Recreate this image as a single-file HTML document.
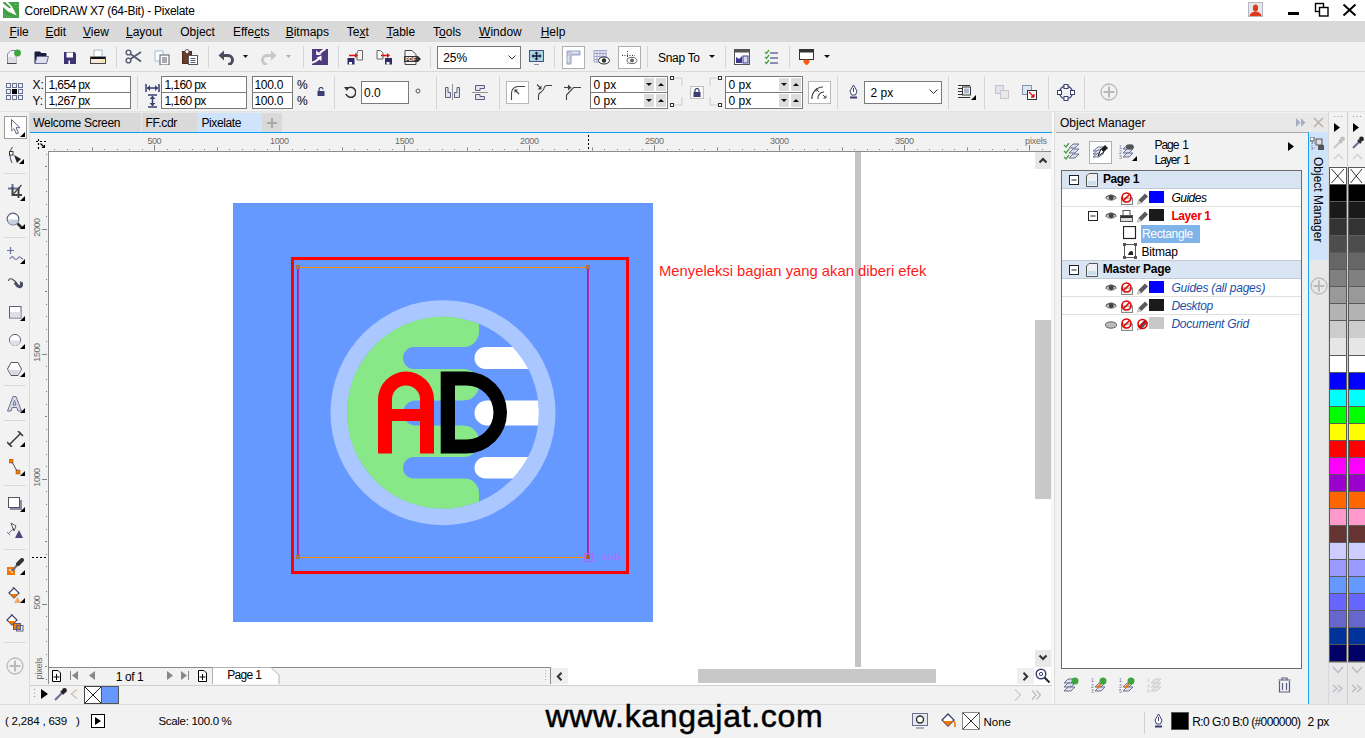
<!DOCTYPE html><html><head><meta charset="utf-8"><style>
*{margin:0;padding:0;box-sizing:border-box}
html,body{width:1365px;height:738px;overflow:hidden;background:#f2f2f2}
body{position:relative;font-family:"Liberation Sans",sans-serif;color:#000}
.r{position:absolute}
.t{position:absolute;line-height:1;white-space:nowrap}
.u{text-decoration:underline;text-underline-offset:1px}
</style></head><body>
<div class="r" style="left:0px;top:0px;width:1365px;height:21px;background:#fff"></div>
<svg class="r" style="left:3px;top:2px;" width="16" height="16" viewBox="0 0 16 16"><rect width="16" height="16" fill="#43a047"/><polygon points="0,0 5,0 8.8,4.3 11.3,8.7 13.6,13.4 5,9.6 0,5" fill="#fff"/><line x1="1.2" y1="0.9" x2="6.6" y2="5.3" stroke="#43a047" stroke-width="2" stroke-linecap="round"/><g fill="#8fd08f"><circle cx="12.5" cy="2.5" r="0.6"/><circle cx="15" cy="2.5" r="0.6"/><circle cx="15" cy="5.5" r="0.6"/><circle cx="1.5" cy="12.5" r="0.6"/><circle cx="3.5" cy="14" r="0.6"/><circle cx="6.5" cy="14.5" r="0.6"/></g></svg>
<div class="t " style="left:24.6px;top:4.64px;font-size:12px;letter-spacing:-0.28px">CorelDRAW X7 (64-Bit) - Pixelate</div>
<svg class="r" style="left:1248px;top:2px;" width="15" height="15" viewBox="0 0 15 15"><rect x="0.5" y="0.5" width="14" height="14" fill="#e6e6ea" stroke="#b8b8c0"/><ellipse cx="7.5" cy="6" rx="2.6" ry="3.6" fill="#e03a1a"/><path d="M1.5,14 Q2,10 7.5,9.5 Q13,10 13.5,14Z" fill="#e03a1a"/></svg>
<div class="r" style="left:1288px;top:12px;width:11px;height:2.5px;background:#000"></div>
<svg class="r" style="left:1314px;top:2px;" width="16" height="15" viewBox="0 0 16 15"><rect x="1.5" y="1.5" width="8" height="8" fill="#fff" stroke="#000" stroke-width="1.4"/><rect x="5.5" y="5.5" width="8.5" height="8.5" fill="#fff" stroke="#000" stroke-width="1.4"/></svg>
<svg class="r" style="left:1342px;top:4px;" width="15" height="12" viewBox="0 0 15 12"><path d="M1.5,0.5 L13.5,11.5 M13.5,0.5 L1.5,11.5" stroke="#000" stroke-width="2"/></svg>
<div class="r" style="left:0px;top:21px;width:1365px;height:21px;background:#d9d9d9"></div>
<div class="t " style="left:9.4px;top:26.24px;font-size:12px;"><u>F</u>ile</div>
<div class="t " style="left:45.4px;top:26.24px;font-size:12px;"><u>E</u>dit</div>
<div class="t " style="left:83px;top:26.24px;font-size:12px;"><u>V</u>iew</div>
<div class="t " style="left:126px;top:26.24px;font-size:12px;"><u>L</u>ayout</div>
<div class="t " style="left:180.2px;top:26.24px;font-size:12px;">Ob<u>j</u>ect</div>
<div class="t " style="left:233px;top:26.24px;font-size:12px;">Effe<u>c</u>ts</div>
<div class="t " style="left:285.7px;top:26.24px;font-size:12px;"><u>B</u>itmaps</div>
<div class="t " style="left:346.7px;top:26.24px;font-size:12px;">Te<u>x</u>t</div>
<div class="t " style="left:386.5px;top:26.24px;font-size:12px;"><u>T</u>able</div>
<div class="t " style="left:433.1px;top:26.24px;font-size:12px;">T<u>o</u>ols</div>
<div class="t " style="left:479.1px;top:26.24px;font-size:12px;"><u>W</u>indow</div>
<div class="t " style="left:540.7px;top:26.24px;font-size:12px;"><u>H</u>elp</div>
<div class="r" style="left:0px;top:42px;width:1365px;height:30px;background:#f2f2f2"></div>
<div class="r" style="left:0px;top:71px;width:1365px;height:1px;background:#dadada"></div>
<div class="r" style="left:116px;top:46px;width:1px;height:22px;background:#d5d5d5"></div>
<div class="r" style="left:208px;top:46px;width:1px;height:22px;background:#d5d5d5"></div>
<div class="r" style="left:303px;top:46px;width:1px;height:22px;background:#d5d5d5"></div>
<div class="r" style="left:338px;top:46px;width:1px;height:22px;background:#d5d5d5"></div>
<div class="r" style="left:430px;top:46px;width:1px;height:22px;background:#d5d5d5"></div>
<div class="r" style="left:554px;top:46px;width:1px;height:22px;background:#d5d5d5"></div>
<div class="r" style="left:647px;top:46px;width:1px;height:22px;background:#d5d5d5"></div>
<div class="r" style="left:725px;top:46px;width:1px;height:22px;background:#d5d5d5"></div>
<div class="r" style="left:789px;top:46px;width:1px;height:22px;background:#d5d5d5"></div>
<svg class="r" style="left:6px;top:49px;" width="16" height="16" viewBox="0 0 16 16"><path d="M1.5,14.5 V5 L5,1.5 H10 V14.5 Z" fill="#f4f4f8" stroke="#8a8ca8"/><rect x="2" y="8" width="8" height="6" fill="#dcdde6"/><path d="M1,14.5 H10.5" stroke="#444"/><circle cx="11.5" cy="4" r="3.4" fill="#3fa53f"/></svg>
<svg class="r" style="left:34px;top:50px;" width="16" height="15" viewBox="0 0 16 15"><path d="M1,13.5 V2 H6 L7,3.5 H12 V6" fill="#1c1c40" stroke="#1c1c40"/><path d="M1,13.5 L3,6.5 H14.5 L12.5,13.5 Z" fill="#dfe0ee" stroke="#6a6c90"/></svg>
<svg class="r" style="left:64px;top:52px;" width="12" height="12" viewBox="0 0 12 12"><path d="M0,0 H10.5 L12,1.5 V12 H0Z" fill="#3c3472"/><rect x="2.5" y="0.5" width="6.5" height="5" fill="#fff"/><rect x="4.5" y="8.5" width="1.5" height="3.5" fill="#fff"/></svg>
<svg class="r" style="left:90px;top:49px;" width="16" height="15" viewBox="0 0 16 15"><rect x="4" y="1" width="8" height="7" fill="#fff" stroke="#a8b8c8"/><rect x="0.5" y="8" width="15" height="6.5" fill="#f6e8d8" stroke="#444"/><rect x="1" y="8" width="14" height="2" fill="#111"/><rect x="12" y="11.5" width="1.5" height="1.2" fill="#ee0"/></svg>
<svg class="r" style="left:125px;top:49px;" width="17" height="15" viewBox="0 0 17 15"><circle cx="3.5" cy="3.5" r="2.4" fill="none" stroke="#555a70" stroke-width="1.4"/><circle cx="3.5" cy="11.5" r="2.4" fill="none" stroke="#555a70" stroke-width="1.4"/><path d="M5.5,5 L16,12.5 M5.5,10 L16,3" stroke="#555a70" stroke-width="1.8"/></svg>
<svg class="r" style="left:154px;top:50px;" width="16" height="15" viewBox="0 0 16 15"><rect x="1" y="1" width="8" height="10" fill="#fff" stroke="#a8c0d0"/><rect x="6" y="5" width="9" height="10" fill="#fff" stroke="#556"/><path d="M8,8 H13 M8,10 H13 M8,12 H13" stroke="#556"/></svg>
<svg class="r" style="left:182px;top:49px;" width="16" height="16" viewBox="0 0 16 16"><rect x="0.5" y="2.5" width="9" height="12" fill="#6a3a2a" stroke="#4a2a1a"/><circle cx="5" cy="2.5" r="2" fill="#fff" stroke="#555"/><rect x="6.5" y="6.5" width="9" height="9" fill="#fff" stroke="#556"/><path d="M8.5,9.5 H13.5 M8.5,11.5 H13.5 M8.5,13.5 H13.5" stroke="#556"/></svg>
<svg class="r" style="left:218px;top:49px;" width="17" height="16" viewBox="0 0 17 16"><path d="M4,6.5 H10 A4.5,4.5 0 0 1 10,15.5" fill="none" stroke="#4a4c5e" stroke-width="3"/><path d="M0.5,6.5 L6,1.5 V11.5 Z" fill="#4a4c5e"/></svg>
<svg class="r" style="left:243px;top:55px;" width="5" height="3" viewBox="0 0 5 3"><path d="M0,0 H5 L2.5,3Z" fill="#111"/></svg>
<svg class="r" style="left:260px;top:49px;" width="17" height="16" viewBox="0 0 17 16"><path d="M13,6.5 H7 A4.5,4.5 0 0 0 7,15.5" fill="none" stroke="#c8c8c8" stroke-width="3"/><path d="M16.5,6.5 L11,1.5 V11.5 Z" fill="#c8c8c8"/></svg>
<svg class="r" style="left:286px;top:55px;" width="5" height="3" viewBox="0 0 5 3"><path d="M0,0 H5 L2.5,3Z" fill="#b0b0b0"/></svg>
<svg class="r" style="left:312px;top:49px;" width="16" height="16" viewBox="0 0 16 16"><rect width="16" height="16" fill="#4f3a7f"/><path d="M13.5,0 Q10,1.5 7.5,4.5" stroke="#fff" stroke-width="2" fill="none"/><path d="M4.2,1.2 V6 H9Z" fill="#fff"/><path d="M0,13.8 Q4,12.5 7,9.5" stroke="#fff" stroke-width="2" fill="none"/><path d="M4.5,8.8 L9.5,6.6 V12Z" fill="#fff"/></svg>
<svg class="r" style="left:347px;top:50px;" width="17" height="15" viewBox="0 0 17 15"><path d="M11,0.5 H15.5 V10 H10 V3 Z" fill="#f6f6f6" stroke="#666"/><rect x="0.5" y="8" width="7" height="6.5" fill="#2f2b66"/><rect x="2" y="12" width="3" height="2.5" fill="#fff"/><path d="M2,5.5 H9" stroke="#e01010" stroke-width="1.6"/><path d="M8,3 L11,5.5 L8,8Z" fill="#e01010"/></svg>
<svg class="r" style="left:376px;top:50px;" width="17" height="15" viewBox="0 0 17 15"><path d="M4.5,0.5 H1 V9 H7 V3 Z" fill="#f6f6f6" stroke="#666"/><rect x="9" y="8" width="7" height="6.5" fill="#2f2b66"/><rect x="10.5" y="12" width="3" height="2.5" fill="#fff"/><path d="M5,5.5 H12" stroke="#e01010" stroke-width="1.6"/><path d="M11,3 L14,5.5 L11,8Z" fill="#e01010"/></svg>
<svg class="r" style="left:404px;top:50px;" width="17" height="15" viewBox="0 0 17 15"><path d="M1,14.5 V0.5 H8 L12,4.5 V14.5Z" fill="#f6f6f6" stroke="#444"/><rect x="0" y="6" width="14" height="6" fill="#333"/><path d="M14,6 L17,9 L14,12Z" fill="#333"/><text x="1.2" y="11.2" font-size="5.5" font-weight="bold" fill="#fff" font-family="Liberation Sans">PDF</text></svg>
<div class="r" style="left:437px;top:46px;width:84px;height:23px;background:#fff;border:1px solid #7a7a7a"></div>
<div class="t " style="left:443.2px;top:51.54px;font-size:12px;">25%</div>
<svg class="r" style="left:508px;top:55px;" width="8" height="5" viewBox="0 0 8 5"><path d="M0.5,0.5 L4,4 L7.5,0.5" fill="none" stroke="#333"/></svg>
<svg class="r" style="left:529px;top:50px;" width="15" height="15" viewBox="0 0 15 15"><rect x="0.5" y="0.5" width="14" height="11" fill="#a6d8e2" stroke="#4a5080"/><path d="M5,14.5 H10" stroke="#8890b0"/><path d="M7.5,2 V10 M3,6 H12" stroke="#1a1a40" stroke-width="1.4"/><path d="M7.5,1.5 L5.5,3.5 H9.5Z M7.5,10.5 L5.5,8.5 H9.5Z M2.5,6 L4.5,4 V8Z M12.5,6 L10.5,4 V8Z" fill="#1a1a40"/></svg>
<div class="r" style="left:562px;top:46px;width:23px;height:23px;background:#fff;border:1px solid #b0b0b0"></div>
<svg class="r" style="left:566px;top:50px;" width="15" height="15" viewBox="0 0 15 15"><path d="M1,1 H14 V5 H5 V14 H1 Z" fill="#c8cce0" stroke="#9aa0c0"/><path d="M7,1.5 V3 M9,1.5 V3 M11,1.5 V3 M1.5,7 H3 M1.5,9 H3 M1.5,11 H3" stroke="#fff"/></svg>
<svg class="r" style="left:593px;top:49px;" width="17" height="16" viewBox="0 0 17 16"><path d="M1,1 V13 M4,1 V13 M7,1 V13 M10,1 V8 M13,1 V7 M1,1.5 H14 M1,4.5 H14 M1,7.5 H14 M1,10.5 H6 M1,13 H6" stroke="#a0a4cc"/><ellipse cx="11" cy="11.5" rx="5.5" ry="3.5" fill="#fff" stroke="#333"/><circle cx="11" cy="11.5" r="2.2" fill="#333"/></svg>
<div class="r" style="left:618px;top:46px;width:23px;height:23px;background:#fff;border:1px solid #b0b0b0"></div>
<svg class="r" style="left:621px;top:50px;" width="17" height="16" viewBox="0 0 17 16"><path d="M6.5,1 V14 M1,5.5 H14" stroke="#333" stroke-dasharray="1,1.5"/><ellipse cx="11" cy="10.5" rx="5" ry="3.2" fill="#fff" stroke="#666"/><circle cx="11" cy="10.5" r="2" fill="#666"/></svg>
<div class="t " style="left:658px;top:52.24px;font-size:12px;letter-spacing:-0.3px">Snap To</div>
<svg class="r" style="left:709px;top:55px;" width="6" height="3" viewBox="0 0 6 3"><path d="M0,0 H6 L3,3Z" fill="#111"/></svg>
<svg class="r" style="left:734px;top:49px;" width="16" height="16" viewBox="0 0 16 16"><rect x="0.5" y="0.5" width="15" height="15" fill="#fff" stroke="#555"/><rect x="0.5" y="0.5" width="15" height="3" fill="#555"/><path d="M2,14 V8 L5,10 L8,7 V14Z" fill="#3a3a90"/><rect x="9" y="7" width="5" height="7" fill="#d0d8f0" stroke="#3a3a90"/></svg>
<svg class="r" style="left:764px;top:49px;" width="14" height="16" viewBox="0 0 14 16"><path d="M1,3 L2.5,4.5 L5,1 M1,8 L2.5,9.5 L5,6 M1,13 L2.5,14.5 L5,11" stroke="#4aa040" stroke-width="1.3" fill="none"/><path d="M6,4 H14 M6,9 H14 M6,14 H14" stroke="#6a6ca0" stroke-width="1.3"/></svg>
<svg class="r" style="left:799px;top:48px;" width="15" height="18" viewBox="0 0 15 18"><rect x="0.5" y="1.5" width="14" height="10" fill="#fff" stroke="#333"/><rect x="0.5" y="1.5" width="14" height="3" fill="#333"/><path d="M4,13 Q7.5,10 11,13 Q9,17 7.5,17 Q6,17 4,13Z" fill="#ff5a10"/></svg>
<svg class="r" style="left:824px;top:55px;" width="6" height="3" viewBox="0 0 6 3"><path d="M0,0 H6 L3,3Z" fill="#111"/></svg>
<div class="r" style="left:0px;top:72px;width:1365px;height:40px;background:#f2f2f2"></div>
<div class="r" style="left:137px;top:76px;width:1px;height:33px;background:#d5d5d5"></div>
<div class="r" style="left:334px;top:76px;width:1px;height:33px;background:#d5d5d5"></div>
<div class="r" style="left:436px;top:76px;width:1px;height:33px;background:#d5d5d5"></div>
<div class="r" style="left:499px;top:76px;width:1px;height:33px;background:#d5d5d5"></div>
<div class="r" style="left:837px;top:76px;width:1px;height:33px;background:#d5d5d5"></div>
<div class="r" style="left:948px;top:76px;width:1px;height:33px;background:#d5d5d5"></div>
<div class="r" style="left:984px;top:76px;width:1px;height:33px;background:#d5d5d5"></div>
<div class="r" style="left:1048px;top:76px;width:1px;height:33px;background:#d5d5d5"></div>
<div class="r" style="left:1084px;top:76px;width:1px;height:33px;background:#d5d5d5"></div>
<svg class="r" style="left:6px;top:83px;" width="17" height="17" viewBox="0 0 17 17"><g fill="none" stroke="#6a7090"><rect x="0.5" y="0.5" width="4" height="4"/><rect x="6.5" y="0.5" width="4" height="4"/><rect x="12.5" y="0.5" width="4" height="4"/><rect x="0.5" y="6.5" width="4" height="4"/><rect x="12.5" y="6.5" width="4" height="4"/><rect x="0.5" y="12.5" width="4" height="4"/><rect x="6.5" y="12.5" width="4" height="4"/><rect x="12.5" y="12.5" width="4" height="4"/></g><rect x="6" y="6" width="5" height="5" fill="#000"/></svg>
<div class="t " style="left:32.4px;top:79.34px;font-size:12px;">X:</div>
<div class="t " style="left:32.4px;top:95.34px;font-size:12px;">Y:</div>
<div class="r" style="left:45px;top:76px;width:86px;height:17px;background:#fff;border:1px solid #7a7a7a"></div>
<div class="r" style="left:45px;top:92px;width:86px;height:17px;background:#fff;border:1px solid #7a7a7a"></div>
<div class="t " style="left:48.5px;top:79.34px;font-size:12px;letter-spacing:-0.6px">1,654 px</div>
<div class="t " style="left:48.5px;top:95.34px;font-size:12px;letter-spacing:-0.6px">1,267 px</div>
<svg class="r" style="left:145px;top:83px;" width="15" height="10" viewBox="0 0 15 10"><path d="M1,1 V9 M14,1 V9 M2,5 H13" stroke="#3a3e70" stroke-width="1.5"/><path d="M2,5 L5,2 V8Z M13,5 L10,2 V8Z" fill="#3a3e70"/></svg>
<svg class="r" style="left:147px;top:94px;" width="11" height="14" viewBox="0 0 11 14"><path d="M1,1 H10 M1,13 H10 M5.5,2 V12" stroke="#3a3e70" stroke-width="1.5"/><path d="M5.5,2 L2.5,5 H8.5Z M5.5,12 L2.5,9 H8.5Z" fill="#3a3e70"/></svg>
<div class="r" style="left:161px;top:76px;width:86px;height:17px;background:#fff;border:1px solid #7a7a7a"></div>
<div class="r" style="left:161px;top:92px;width:86px;height:17px;background:#fff;border:1px solid #7a7a7a"></div>
<div class="t " style="left:164.5px;top:79.34px;font-size:12px;letter-spacing:-0.6px">1,160 px</div>
<div class="t " style="left:164.5px;top:95.34px;font-size:12px;letter-spacing:-0.6px">1,160 px</div>
<div class="r" style="left:252px;top:76px;width:41px;height:17px;background:#fff;border:1px solid #7a7a7a"></div>
<div class="r" style="left:252px;top:92px;width:41px;height:17px;background:#fff;border:1px solid #7a7a7a"></div>
<div class="t " style="left:254.5px;top:79.34px;font-size:12px;letter-spacing:-0.3px">100.0</div>
<div class="t " style="left:254.5px;top:95.34px;font-size:12px;letter-spacing:-0.3px">100.0</div>
<div class="t " style="left:297px;top:79.34px;font-size:12px;">%</div>
<div class="t " style="left:297px;top:95.34px;font-size:12px;">%</div>
<svg class="r" style="left:317px;top:87px;" width="8" height="9" viewBox="0 0 8 9"><path d="M2,4 V2.5 A2,2 0 0 1 6,2.5" fill="none" stroke="#3a3e70" stroke-width="1.2"/><rect x="0.5" y="4" width="7" height="5" fill="#3a3e70"/></svg>
<svg class="r" style="left:344px;top:85px;" width="12" height="13" viewBox="0 0 12 13"><path d="M3,4 A5,5 0 1 1 2,9" fill="none" stroke="#333" stroke-width="1.5"/><path d="M0,2 L5,2 L3,6Z" fill="#333"/></svg>
<div class="r" style="left:361px;top:81px;width:48px;height:23px;background:#fff;border:1px solid #7a7a7a"></div>
<div class="t " style="left:364px;top:87.34px;font-size:12px;">0.0</div>
<svg class="r" style="left:415px;top:88px;" width="6" height="6" viewBox="0 0 6 6"><circle cx="3" cy="3" r="2" fill="none" stroke="#555"/></svg>
<svg class="r" style="left:444px;top:84px;" width="17" height="17" viewBox="0 0 17 17"><path d="M1.5,3.5 H4 V8.5 H6.5 V13.5 H1.5 Z M15.5,3.5 H13 V8.5 H10.5 V13.5 H15.5 Z" fill="#e2e4ee" stroke="#5a5e80"/><path d="M8.5,0.5 V16.5" stroke="#333" stroke-dasharray="1,1"/></svg>
<svg class="r" style="left:472px;top:84px;" width="17" height="17" viewBox="0 0 17 17"><path d="M3.5,1.5 H12.5 V4.5 H8 V6.5 H3.5 Z M3.5,15.5 H12.5 V12.5 H8 V10.5 H3.5 Z" fill="#e2e4ee" stroke="#5a5e80"/><path d="M0.5,8.5 H16.5" stroke="#333" stroke-dasharray="1,1"/></svg>
<div class="r" style="left:506px;top:81px;width:23px;height:23px;background:#fff;border:1px solid #b8b8b8"></div>
<svg class="r" style="left:509px;top:84px;" width="17" height="17" viewBox="0 0 17 17"><path d="M2.5,16 V9 A6.5,6.5 0 0 1 9,2.5 H16" fill="none" stroke="#444" stroke-width="1.1"/><path d="M6,6 L10,10" stroke="#444" stroke-width="1.1"/><path d="M5.5,5.5 H9 L5.5,9Z" fill="#444"/></svg>
<svg class="r" style="left:536px;top:84px;" width="18" height="17" viewBox="0 0 18 17"><path d="M2.5,16 V11.5 Q2.5,9.5 5,8 Q8,6 8.5,3 Q9,1.5 11,1.5 H16" fill="none" stroke="#444" stroke-width="1.1"/><path d="M1,0.5 L4.5,4" stroke="#444" stroke-width="1.1"/><path d="M5.5,1.5 V5.5 H1.5Z" fill="#444"/></svg>
<svg class="r" style="left:564px;top:84px;" width="18" height="17" viewBox="0 0 18 17"><path d="M2.5,16 V11 L9.5,3.5 H17" fill="none" stroke="#444" stroke-width="1.1"/><path d="M0,3.5 H5" stroke="#444" stroke-width="1.1"/><path d="M4,0.5 L7.5,3.5 L4,6.5Z" fill="#444"/></svg>
<div class="r" style="left:590px;top:76px;width:78px;height:17px;background:#fff;border:1px solid #7a7a7a"></div>
<div class="t " style="left:593.5px;top:79.34px;font-size:12px;">0 px</div>
<div class="r" style="left:644px;top:78px;width:10px;height:13px;background:#dcdcdc"></div>
<div class="r" style="left:656px;top:78px;width:10px;height:13px;background:#dcdcdc"></div>
<svg class="r" style="left:646px;top:83px;" width="6" height="3" viewBox="0 0 6 3"><path d="M0,0 H6 L3,3Z" fill="#111"/></svg>
<svg class="r" style="left:658px;top:83px;" width="6" height="3" viewBox="0 0 6 3"><path d="M0,3 H6 L3,0Z" fill="#111"/></svg>
<div class="r" style="left:590px;top:92px;width:78px;height:17px;background:#fff;border:1px solid #7a7a7a"></div>
<div class="t " style="left:593.5px;top:95.34px;font-size:12px;">0 px</div>
<div class="r" style="left:644px;top:94px;width:10px;height:13px;background:#dcdcdc"></div>
<div class="r" style="left:656px;top:94px;width:10px;height:13px;background:#dcdcdc"></div>
<svg class="r" style="left:646px;top:99px;" width="6" height="3" viewBox="0 0 6 3"><path d="M0,0 H6 L3,3Z" fill="#111"/></svg>
<svg class="r" style="left:658px;top:99px;" width="6" height="3" viewBox="0 0 6 3"><path d="M0,3 H6 L3,0Z" fill="#111"/></svg>
<svg class="r" style="left:670px;top:76px;" width="14" height="32" viewBox="0 0 14 32"><rect x="0.5" y="0.5" width="3" height="3" fill="#fff" stroke="#333"/><path d="M4,2 H12 V10" fill="none" stroke="#ccc"/><rect x="0.5" y="27.5" width="3" height="3" fill="#fff" stroke="#333"/><path d="M4,29 H12 V21" fill="none" stroke="#ccc"/></svg>
<div class="r" style="left:690px;top:86px;width:14px;height:13px;background:#f8f8f8;border:1px solid #c0c0c0"></div>
<svg class="r" style="left:693px;top:88px;" width="8" height="9" viewBox="0 0 8 9"><path d="M2,4 V2.5 A2,2 0 0 1 6,2.5 V4" fill="none" stroke="#3a3e70" stroke-width="1.2"/><rect x="0.5" y="4" width="7" height="5" fill="#3a3e70"/></svg>
<svg class="r" style="left:709px;top:76px;" width="14" height="32" viewBox="0 0 14 32"><rect x="9.5" y="0.5" width="3" height="3" fill="#fff" stroke="#333"/><path d="M9,2 H1 V10" fill="none" stroke="#ccc"/><rect x="9.5" y="27.5" width="3" height="3" fill="#fff" stroke="#333"/><path d="M9,29 H1 V21" fill="none" stroke="#ccc"/></svg>
<div class="r" style="left:725px;top:76px;width:78px;height:17px;background:#fff;border:1px solid #7a7a7a"></div>
<div class="t " style="left:728.5px;top:79.34px;font-size:12px;">0 px</div>
<div class="r" style="left:779px;top:78px;width:10px;height:13px;background:#dcdcdc"></div>
<div class="r" style="left:791px;top:78px;width:10px;height:13px;background:#dcdcdc"></div>
<svg class="r" style="left:781px;top:83px;" width="6" height="3" viewBox="0 0 6 3"><path d="M0,0 H6 L3,3Z" fill="#111"/></svg>
<svg class="r" style="left:793px;top:83px;" width="6" height="3" viewBox="0 0 6 3"><path d="M0,3 H6 L3,0Z" fill="#111"/></svg>
<div class="r" style="left:725px;top:92px;width:78px;height:17px;background:#fff;border:1px solid #7a7a7a"></div>
<div class="t " style="left:728.5px;top:95.34px;font-size:12px;">0 px</div>
<div class="r" style="left:779px;top:94px;width:10px;height:13px;background:#dcdcdc"></div>
<div class="r" style="left:791px;top:94px;width:10px;height:13px;background:#dcdcdc"></div>
<svg class="r" style="left:781px;top:99px;" width="6" height="3" viewBox="0 0 6 3"><path d="M0,0 H6 L3,3Z" fill="#111"/></svg>
<svg class="r" style="left:793px;top:99px;" width="6" height="3" viewBox="0 0 6 3"><path d="M0,3 H6 L3,0Z" fill="#111"/></svg>
<div class="r" style="left:808px;top:81px;width:23px;height:23px;background:#fff;border:1px solid #b8b8b8"></div>
<svg class="r" style="left:810px;top:84px;" width="19" height="17" viewBox="0 0 19 17"><path d="M2,15 A11,11 0 0 1 13,3" fill="none" stroke="#444" stroke-width="1.2"/><path d="M8,15 A6,6 0 0 1 14,8" fill="none" stroke="#444" stroke-width="1.2"/><path d="M6,5 L9,8 M6,5 H8.5 M6,5 V7.5 M13,11 L16,14 M16,14 H13.5 M16,14 V11.5" stroke="#444"/></svg>
<svg class="r" style="left:849px;top:84px;" width="9" height="15" viewBox="0 0 9 15"><path d="M4.5,1 L8,7 L6.5,11 H2.5 L1,7Z" fill="#fff" stroke="#3a3e70"/><path d="M4.5,4 V8" stroke="#3a3e70"/><rect x="1" y="12.5" width="7" height="2" fill="#3a3e70"/></svg>
<div class="r" style="left:864px;top:81px;width:78px;height:23px;background:#fff;border:1px solid #7a7a7a"></div>
<div class="t " style="left:870.5px;top:87.34px;font-size:12px;">2 px</div>
<svg class="r" style="left:929px;top:89px;" width="9" height="5" viewBox="0 0 9 5"><path d="M0.5,0.5 L4.5,4.5 L8.5,0.5" fill="none" stroke="#333"/></svg>
<svg class="r" style="left:958px;top:84px;" width="18" height="16" viewBox="0 0 18 16"><path d="M0,1.5 H12 M0,4.5 H4 M0,7.5 H4 M0,10.5 H4 M0,13.5 H12" stroke="#333"/><rect x="4.5" y="3" width="8" height="8" fill="#fff" stroke="#333"/><rect x="6" y="4.5" width="5" height="5" fill="#b0b8d0"/><path d="M18,11 V16 H13Z" fill="#000"/></svg>
<svg class="r" style="left:995px;top:85px;" width="14" height="14" viewBox="0 0 14 14"><rect x="0.5" y="0.5" width="8" height="8" fill="#e0e4ec" stroke="#c0c4d0"/><rect x="5.5" y="5.5" width="8" height="8" fill="#e8e8e8" stroke="#c8c8c8"/></svg>
<svg class="r" style="left:1022px;top:85px;" width="16" height="15" viewBox="0 0 16 15"><rect x="0.5" y="0.5" width="9" height="9" fill="#dde4f4" stroke="#8890b0"/><rect x="5.5" y="5.5" width="9" height="9" fill="#fff" stroke="#333"/><path d="M7,7 L12,12 M12,12 H9 M12,12 V9" stroke="#e01010" stroke-width="1.3"/></svg>
<svg class="r" style="left:1057px;top:84px;" width="18" height="17" viewBox="0 0 18 17"><circle cx="9" cy="8.5" r="6.5" fill="none" stroke="#3a3e70" stroke-width="1.3"/><g fill="#fff" stroke="#3a3e70"><rect x="7" y="0.5" width="4" height="4"/><rect x="7" y="12.5" width="4" height="4"/><rect x="0.5" y="6.5" width="4" height="4"/><rect x="13.5" y="6.5" width="4" height="4"/></g></svg>
<svg class="r" style="left:1100px;top:83px;" width="18" height="18" viewBox="0 0 18 18"><circle cx="9" cy="9" r="8" fill="none" stroke="#b8b8b8" stroke-width="1.3"/><path d="M9,3.5 V14.5 M3.5,9 H14.5" stroke="#b8b8b8" stroke-width="2"/></svg>
<div class="r" style="left:0px;top:111px;width:1365px;height:1px;background:#e4e4e4"></div>
<div class="r" style="left:0px;top:112px;width:29px;height:592px;background:#f2f2f2"></div>
<div class="r" style="left:29px;top:112px;width:1px;height:592px;background:#dcdcdc"></div>
<div class="r" style="left:4px;top:173px;width:22px;height:1px;background:#d8d8d8"></div>
<div class="r" style="left:4px;top:237px;width:22px;height:1px;background:#d8d8d8"></div>
<div class="r" style="left:4px;top:385px;width:22px;height:1px;background:#d8d8d8"></div>
<div class="r" style="left:4px;top:420px;width:22px;height:1px;background:#d8d8d8"></div>
<div class="r" style="left:4px;top:485px;width:22px;height:1px;background:#d8d8d8"></div>
<div class="r" style="left:4px;top:549px;width:22px;height:1px;background:#d8d8d8"></div>
<div class="r" style="left:4px;top:642px;width:22px;height:1px;background:#d8d8d8"></div>
<div class="r" style="left:4px;top:116px;width:23px;height:23px;background:#fff;border:1px solid #9a9a9a"></div>
<svg class="r" style="left:10px;top:118px;" width="12" height="17" viewBox="0 0 12 17"><path d="M1.5,1.5 V13 L4,10.7 L6.5,16 L8.5,15 L6,9.7 H10 Z" fill="#fff" stroke="#5a6080" stroke-linejoin="round"/><path d="M2,8 V12.5 L3.5,11" stroke="#c8ccd8" fill="none"/></svg>
<svg class="r" style="left:20px;top:132px;" width="5" height="5" viewBox="0 0 5 5"><path d="M5,0 V5 H0Z" fill="#000"/></svg>
<svg class="r" style="left:7px;top:146px;" width="17" height="19" viewBox="0 0 17 19"><path d="M5.5,1 Q2,6 3,10 Q3.5,14 5,17" fill="none" stroke="#5a6080" stroke-width="1.2"/><rect x="2.5" y="5.5" width="3.5" height="3.5" fill="#fff" stroke="#333"/><path d="M7,9 L14,13 L10,17Z" fill="#222"/></svg>
<svg class="r" style="left:19px;top:159px;" width="5" height="5" viewBox="0 0 5 5"><path d="M5,0 V5 H0Z" fill="#000"/></svg>
<svg class="r" style="left:7px;top:183px;" width="17" height="17" viewBox="0 0 17 17"><path d="M1,5.5 H13" stroke="#6a70a0" stroke-width="2"/><path d="M5.5,1 V4" stroke="#6a70a0" stroke-width="2"/><path d="M5.5,4 V12 H15 M11.5,5.5 V15" fill="none" stroke="#444" stroke-width="2"/><path d="M5.5,12 L14.5,2" stroke="#444" stroke-width="1.2"/></svg>
<svg class="r" style="left:20px;top:196px;" width="5" height="5" viewBox="0 0 5 5"><path d="M5,0 V5 H0Z" fill="#000"/></svg>
<svg class="r" style="left:6px;top:212px;" width="18" height="18" viewBox="0 0 18 18"><circle cx="7" cy="7" r="5.8" fill="#fff" stroke="#5a6080" stroke-width="1.2"/><path d="M1.7,7.5 A5.3,5.3 0 0 0 12.3,7.5Z" fill="#c8d0dc"/><path d="M11.5,11.5 L16,16" stroke="#333" stroke-width="2.6"/></svg>
<svg class="r" style="left:20px;top:224px;" width="5" height="5" viewBox="0 0 5 5"><path d="M5,0 V5 H0Z" fill="#000"/></svg>
<svg class="r" style="left:6px;top:246px;" width="18" height="18" viewBox="0 0 18 18"><path d="M1,4.5 H8 M4.5,1 V8" stroke="#6a70a0" stroke-width="1.2"/><path d="M4,13 Q6,9 8,12 Q10,15 12,12 Q13.5,9.5 15,12 L17,13" fill="none" stroke="#6a70a0" stroke-width="1.2"/></svg>
<svg class="r" style="left:20px;top:259px;" width="5" height="5" viewBox="0 0 5 5"><path d="M5,0 V5 H0Z" fill="#000"/></svg>
<svg class="r" style="left:7px;top:277px;" width="16" height="12" viewBox="0 0 16 12"><path d="M1.5,4 Q2,1 5,2 Q8,3.5 10,7 Q12,10 14,8.5 Q15.5,6 13,4.5" fill="none" stroke="#4a4c60" stroke-width="1.2"/><path d="M8,5.5 Q11,10.5 13.5,9.5 Q15.5,8 14,5.5" fill="none" stroke="#4a4c60" stroke-width="3"/></svg>
<svg class="r" style="left:9px;top:306px;" width="13" height="13" viewBox="0 0 13 13"><rect x="0.5" y="0.5" width="11.5" height="11.5" fill="#fff" stroke="#5a5e80"/><rect x="1" y="6" width="10.5" height="5.5" fill="#dcdee8"/></svg>
<svg class="r" style="left:20px;top:316px;" width="5" height="5" viewBox="0 0 5 5"><path d="M5,0 V5 H0Z" fill="#000"/></svg>
<svg class="r" style="left:9px;top:334px;" width="13" height="13" viewBox="0 0 13 13"><circle cx="6" cy="6" r="5.6" fill="#fff" stroke="#5a5e80"/><path d="M0.6,6.5 A5.4,5.4 0 0 0 11.4,6.5Z" fill="#dcdee8"/></svg>
<svg class="r" style="left:20px;top:344px;" width="5" height="5" viewBox="0 0 5 5"><path d="M5,0 V5 H0Z" fill="#000"/></svg>
<svg class="r" style="left:7px;top:362px;" width="18" height="15" viewBox="0 0 18 15"><path d="M4,0.5 H11 L14.5,7 L11,13.5 H4 L0.5,7Z" fill="#fff" stroke="#555"/><path d="M1.5,8 H13.8 L11,13 H4Z" fill="#d8dae6"/></svg>
<svg class="r" style="left:20px;top:372px;" width="5" height="5" viewBox="0 0 5 5"><path d="M5,0 V5 H0Z" fill="#000"/></svg>
<svg class="r" style="left:7px;top:396px;" width="18" height="17" viewBox="0 0 18 17"><path d="M0.5,15 L6,0.5 H9 L14.5,15 H11 L9.8,11.5 H5.2 L4,15Z M6,9 H9 L7.5,4.5Z" fill="#d8dae6" stroke="#6a6e90" fill-rule="evenodd"/></svg>
<svg class="r" style="left:20px;top:408px;" width="5" height="5" viewBox="0 0 5 5"><path d="M5,0 V5 H0Z" fill="#000"/></svg>
<svg class="r" style="left:7px;top:431px;" width="17" height="16" viewBox="0 0 17 16"><path d="M2,14 L14,2" stroke="#333" stroke-width="1.5"/><path d="M0,11 L5,16 M11,0 L16,5" stroke="#333" stroke-width="1.5"/></svg>
<svg class="r" style="left:20px;top:442px;" width="5" height="5" viewBox="0 0 5 5"><path d="M5,0 V5 H0Z" fill="#000"/></svg>
<svg class="r" style="left:9px;top:459px;" width="16" height="17" viewBox="0 0 16 17"><rect x="0" y="0" width="4" height="4" fill="#f07800" stroke="#a05000" stroke-width="0.5"/><rect x="7" y="11" width="4" height="4" fill="#f07800" stroke="#a05000" stroke-width="0.5"/><path d="M3,3 L8,12" stroke="#4a4e70"/></svg>
<svg class="r" style="left:20px;top:471px;" width="5" height="5" viewBox="0 0 5 5"><path d="M5,0 V5 H0Z" fill="#000"/></svg>
<svg class="r" style="left:8px;top:497px;" width="16" height="15" viewBox="0 0 16 15"><rect x="2" y="3" width="12" height="10" fill="#8a8ca8"/><rect x="0.5" y="0.5" width="11" height="10" fill="#fff" stroke="#555"/></svg>
<svg class="r" style="left:20px;top:507px;" width="5" height="5" viewBox="0 0 5 5"><path d="M5,0 V5 H0Z" fill="#000"/></svg>
<svg class="r" style="left:7px;top:522px;" width="17" height="17" viewBox="0 0 17 17"><path d="M4,1 L9,4 L7,9 Z" fill="#fff" stroke="#555"/><path d="M7,6 L1,12 M0,10 L3,13" stroke="#6a6e90"/><path d="M12,8 L16,16 H8Z" fill="#4a4880"/></svg>
<svg class="r" style="left:6px;top:558px;" width="18" height="18" viewBox="0 0 18 18"><rect x="1" y="9" width="8" height="8" fill="#f07800"/><rect x="3" y="11" width="2" height="2" fill="#ffd0a0"/><rect x="5" y="13" width="2" height="2" fill="#ffd0a0"/><path d="M6,13 L13,5" stroke="#6a6e90" stroke-width="2"/><path d="M12,6 L16,2" stroke="#333" stroke-width="4" stroke-linecap="round"/></svg>
<svg class="r" style="left:20px;top:570px;" width="5" height="5" viewBox="0 0 5 5"><path d="M5,0 V5 H0Z" fill="#000"/></svg>
<svg class="r" style="left:8px;top:587px;" width="17" height="17" viewBox="0 0 17 17"><path d="M1,6 L6,1 L11,6 L6,11Z" fill="#fff" stroke="#3a3e70" stroke-width="1.2"/><path d="M2,7 H10 L6,11Z" fill="#f07800"/><path d="M5,1 L6,-1 M6,1 L8,3" stroke="#3a3e70"/><path d="M9.5,10 L13,16 H6Z" fill="#f4a868"/></svg>
<svg class="r" style="left:20px;top:598px;" width="5" height="5" viewBox="0 0 5 5"><path d="M5,0 V5 H0Z" fill="#000"/></svg>
<svg class="r" style="left:6px;top:614px;" width="18" height="18" viewBox="0 0 18 18"><path d="M1,6 L6,1 L11,6 L6,11Z" fill="#fff" stroke="#3a3e70" stroke-width="1.2"/><path d="M2,7 H10 L6,11Z" fill="#f07800"/><path d="M5,1 L6,-1 M6,1 L8,3" stroke="#3a3e70"/><rect x="7.5" y="9.5" width="7" height="6" fill="#f07800" stroke="#5a5e80"/><rect x="10.5" y="11.5" width="6.5" height="5.5" fill="none" stroke="#5a5e80"/></svg>
<svg class="r" style="left:6px;top:657px;" width="18" height="18" viewBox="0 0 18 18"><circle cx="9" cy="9" r="8" fill="none" stroke="#bbb" stroke-width="1.3"/><path d="M9,3.5 V14.5 M3.5,9 H14.5" stroke="#bbb" stroke-width="2"/></svg>
<div class="r" style="left:30px;top:112px;width:1022px;height:20px;background:#e8e8e8"></div>
<div class="r" style="left:30px;top:113px;width:111px;height:19px;background:#d9d9d9"></div>
<div class="r" style="left:142px;top:113px;width:55px;height:19px;background:#d9d9d9"></div>
<div class="r" style="left:197px;top:113px;width:65px;height:19px;background:#cfe3fb"></div>
<div class="r" style="left:262px;top:113px;width:20px;height:19px;background:#d9d9d9"></div>
<div class="t " style="left:33.3px;top:116.84px;font-size:12px;letter-spacing:-0.3px">Welcome Screen</div>
<div class="t " style="left:145.5px;top:116.84px;font-size:12px;letter-spacing:-0.3px">FF.cdr</div>
<div class="t " style="left:201.5px;top:116.84px;font-size:12px;letter-spacing:-0.4px">Pixelate</div>
<svg class="r" style="left:264px;top:115px;" width="16" height="16" viewBox="0 0 16 16"><path d="M8,3 V13 M3,8 H13" stroke="#aaa" stroke-width="2"/></svg>
<div class="r" style="left:30px;top:132px;width:1022px;height:1px;background:#0a9ff0"></div>
<div class="r" style="left:30px;top:133px;width:1022px;height:19px;background:#f2f2f2"></div>
<div class="r" style="left:30px;top:152px;width:18px;height:530px;background:#f2f2f2"></div>
<svg class="r" style="left:0;top:0" width="1365" height="738"><rect x="54" y="149" width="1" height="1" fill="#808080"/><rect x="67" y="149" width="1" height="1" fill="#808080"/><rect x="79" y="149" width="1" height="1" fill="#808080"/><line x1="92.5" y1="147.5" x2="92.5" y2="150.5" stroke="#808080"/><rect x="104" y="149" width="1" height="1" fill="#808080"/><rect x="117" y="149" width="1" height="1" fill="#808080"/><rect x="129" y="149" width="1" height="1" fill="#808080"/><rect x="142" y="149" width="1" height="1" fill="#808080"/><line x1="154.5" y1="145" x2="154.5" y2="150.5" stroke="#808080"/><rect x="167" y="149" width="1" height="1" fill="#808080"/><rect x="179" y="149" width="1" height="1" fill="#808080"/><rect x="192" y="149" width="1" height="1" fill="#808080"/><rect x="204" y="149" width="1" height="1" fill="#808080"/><line x1="217.5" y1="147.5" x2="217.5" y2="150.5" stroke="#808080"/><rect x="229" y="149" width="1" height="1" fill="#808080"/><rect x="242" y="149" width="1" height="1" fill="#808080"/><rect x="254" y="149" width="1" height="1" fill="#808080"/><rect x="267" y="149" width="1" height="1" fill="#808080"/><line x1="279.5" y1="145" x2="279.5" y2="150.5" stroke="#808080"/><rect x="292" y="149" width="1" height="1" fill="#808080"/><rect x="304" y="149" width="1" height="1" fill="#808080"/><rect x="317" y="149" width="1" height="1" fill="#808080"/><rect x="329" y="149" width="1" height="1" fill="#808080"/><line x1="342.5" y1="147.5" x2="342.5" y2="150.5" stroke="#808080"/><rect x="354" y="149" width="1" height="1" fill="#808080"/><rect x="367" y="149" width="1" height="1" fill="#808080"/><rect x="379" y="149" width="1" height="1" fill="#808080"/><rect x="392" y="149" width="1" height="1" fill="#808080"/><line x1="404.5" y1="145" x2="404.5" y2="150.5" stroke="#808080"/><rect x="417" y="149" width="1" height="1" fill="#808080"/><rect x="429" y="149" width="1" height="1" fill="#808080"/><rect x="442" y="149" width="1" height="1" fill="#808080"/><rect x="454" y="149" width="1" height="1" fill="#808080"/><line x1="467.5" y1="147.5" x2="467.5" y2="150.5" stroke="#808080"/><rect x="479" y="149" width="1" height="1" fill="#808080"/><rect x="492" y="149" width="1" height="1" fill="#808080"/><rect x="504" y="149" width="1" height="1" fill="#808080"/><rect x="517" y="149" width="1" height="1" fill="#808080"/><line x1="529.5" y1="145" x2="529.5" y2="150.5" stroke="#808080"/><rect x="542" y="149" width="1" height="1" fill="#808080"/><rect x="554" y="149" width="1" height="1" fill="#808080"/><rect x="567" y="149" width="1" height="1" fill="#808080"/><rect x="579" y="149" width="1" height="1" fill="#808080"/><line x1="592.5" y1="147.5" x2="592.5" y2="150.5" stroke="#808080"/><rect x="604" y="149" width="1" height="1" fill="#808080"/><rect x="617" y="149" width="1" height="1" fill="#808080"/><rect x="629" y="149" width="1" height="1" fill="#808080"/><rect x="642" y="149" width="1" height="1" fill="#808080"/><line x1="654.5" y1="145" x2="654.5" y2="150.5" stroke="#808080"/><rect x="667" y="149" width="1" height="1" fill="#808080"/><rect x="679" y="149" width="1" height="1" fill="#808080"/><rect x="692" y="149" width="1" height="1" fill="#808080"/><rect x="704" y="149" width="1" height="1" fill="#808080"/><line x1="717.5" y1="147.5" x2="717.5" y2="150.5" stroke="#808080"/><rect x="729" y="149" width="1" height="1" fill="#808080"/><rect x="742" y="149" width="1" height="1" fill="#808080"/><rect x="754" y="149" width="1" height="1" fill="#808080"/><rect x="767" y="149" width="1" height="1" fill="#808080"/><line x1="779.5" y1="145" x2="779.5" y2="150.5" stroke="#808080"/><rect x="792" y="149" width="1" height="1" fill="#808080"/><rect x="804" y="149" width="1" height="1" fill="#808080"/><rect x="817" y="149" width="1" height="1" fill="#808080"/><rect x="829" y="149" width="1" height="1" fill="#808080"/><line x1="842.5" y1="147.5" x2="842.5" y2="150.5" stroke="#808080"/><rect x="854" y="149" width="1" height="1" fill="#808080"/><rect x="867" y="149" width="1" height="1" fill="#808080"/><rect x="879" y="149" width="1" height="1" fill="#808080"/><rect x="892" y="149" width="1" height="1" fill="#808080"/><line x1="904.5" y1="145" x2="904.5" y2="150.5" stroke="#808080"/><rect x="917" y="149" width="1" height="1" fill="#808080"/><rect x="929" y="149" width="1" height="1" fill="#808080"/><rect x="942" y="149" width="1" height="1" fill="#808080"/><rect x="954" y="149" width="1" height="1" fill="#808080"/><line x1="967.5" y1="147.5" x2="967.5" y2="150.5" stroke="#808080"/><rect x="979" y="149" width="1" height="1" fill="#808080"/><rect x="992" y="149" width="1" height="1" fill="#808080"/><rect x="1004" y="149" width="1" height="1" fill="#808080"/><rect x="1017" y="149" width="1" height="1" fill="#808080"/><line x1="1029.5" y1="145" x2="1029.5" y2="150.5" stroke="#808080"/><rect x="1042" y="149" width="1" height="1" fill="#808080"/><rect x="46" y="679" width="1" height="1" fill="#808080"/><line x1="45" y1="666.5" x2="47" y2="666.5" stroke="#808080"/><rect x="46" y="654" width="1" height="1" fill="#808080"/><rect x="46" y="641" width="1" height="1" fill="#808080"/><rect x="46" y="629" width="1" height="1" fill="#808080"/><rect x="46" y="616" width="1" height="1" fill="#808080"/><line x1="42" y1="604.5" x2="47" y2="604.5" stroke="#808080"/><rect x="46" y="591" width="1" height="1" fill="#808080"/><rect x="46" y="579" width="1" height="1" fill="#808080"/><rect x="46" y="566" width="1" height="1" fill="#808080"/><rect x="46" y="554" width="1" height="1" fill="#808080"/><line x1="45" y1="541.5" x2="47" y2="541.5" stroke="#808080"/><rect x="46" y="529" width="1" height="1" fill="#808080"/><rect x="46" y="516" width="1" height="1" fill="#808080"/><rect x="46" y="504" width="1" height="1" fill="#808080"/><rect x="46" y="491" width="1" height="1" fill="#808080"/><line x1="42" y1="479.5" x2="47" y2="479.5" stroke="#808080"/><rect x="46" y="466" width="1" height="1" fill="#808080"/><rect x="46" y="454" width="1" height="1" fill="#808080"/><rect x="46" y="441" width="1" height="1" fill="#808080"/><rect x="46" y="429" width="1" height="1" fill="#808080"/><line x1="45" y1="416.5" x2="47" y2="416.5" stroke="#808080"/><rect x="46" y="404" width="1" height="1" fill="#808080"/><rect x="46" y="391" width="1" height="1" fill="#808080"/><rect x="46" y="379" width="1" height="1" fill="#808080"/><rect x="46" y="366" width="1" height="1" fill="#808080"/><line x1="42" y1="354.5" x2="47" y2="354.5" stroke="#808080"/><rect x="46" y="341" width="1" height="1" fill="#808080"/><rect x="46" y="329" width="1" height="1" fill="#808080"/><rect x="46" y="316" width="1" height="1" fill="#808080"/><rect x="46" y="304" width="1" height="1" fill="#808080"/><line x1="45" y1="291.5" x2="47" y2="291.5" stroke="#808080"/><rect x="46" y="279" width="1" height="1" fill="#808080"/><rect x="46" y="266" width="1" height="1" fill="#808080"/><rect x="46" y="254" width="1" height="1" fill="#808080"/><rect x="46" y="241" width="1" height="1" fill="#808080"/><line x1="42" y1="229.5" x2="47" y2="229.5" stroke="#808080"/><rect x="46" y="216" width="1" height="1" fill="#808080"/><rect x="46" y="204" width="1" height="1" fill="#808080"/><rect x="46" y="191" width="1" height="1" fill="#808080"/><rect x="46" y="179" width="1" height="1" fill="#808080"/><line x1="45" y1="166.5" x2="47" y2="166.5" stroke="#808080"/><rect x="46" y="154" width="1" height="1" fill="#808080"/><line x1="588.5" y1="135" x2="588.5" y2="151" stroke="#000" stroke-dasharray="2,2"/><line x1="32" y1="557.5" x2="48" y2="557.5" stroke="#000" stroke-dasharray="2,2"/></svg>
<div class="t" style="left:134.3px;top:136.8px;width:40px;text-align:center;font-size:9px;color:#6a6a6a;letter-spacing:-0.4px">500</div>
<div class="t" style="left:259.3px;top:136.8px;width:40px;text-align:center;font-size:9px;color:#6a6a6a;letter-spacing:-0.4px">1000</div>
<div class="t" style="left:384.3px;top:136.8px;width:40px;text-align:center;font-size:9px;color:#6a6a6a;letter-spacing:-0.4px">1500</div>
<div class="t" style="left:509.3px;top:136.8px;width:40px;text-align:center;font-size:9px;color:#6a6a6a;letter-spacing:-0.4px">2000</div>
<div class="t" style="left:634.3px;top:136.8px;width:40px;text-align:center;font-size:9px;color:#6a6a6a;letter-spacing:-0.4px">2500</div>
<div class="t" style="left:759.3px;top:136.8px;width:40px;text-align:center;font-size:9px;color:#6a6a6a;letter-spacing:-0.4px">3000</div>
<div class="t" style="left:884.3px;top:136.8px;width:40px;text-align:center;font-size:9px;color:#6a6a6a;letter-spacing:-0.4px">3500</div>
<div class="t" style="left:1018px;top:137px;width:36px;text-align:center;font-size:9px;color:#6a6a6a;letter-spacing:-0.2px">pixels</div>
<div class="t" style="left:17px;top:598.2px;width:40px;height:9px;text-align:center;font-size:9px;color:#6a6a6a;letter-spacing:-0.4px;transform:rotate(-90deg)">500</div>
<div class="t" style="left:17px;top:473.2px;width:40px;height:9px;text-align:center;font-size:9px;color:#6a6a6a;letter-spacing:-0.4px;transform:rotate(-90deg)">1000</div>
<div class="t" style="left:17px;top:348.2px;width:40px;height:9px;text-align:center;font-size:9px;color:#6a6a6a;letter-spacing:-0.4px;transform:rotate(-90deg)">1500</div>
<div class="t" style="left:17px;top:223.2px;width:40px;height:9px;text-align:center;font-size:9px;color:#6a6a6a;letter-spacing:-0.4px;transform:rotate(-90deg)">2000</div>
<div class="t" style="left:18.5px;top:663.5px;width:40px;height:9px;text-align:center;font-size:9px;color:#6a6a6a;letter-spacing:-0.2px;transform:rotate(-90deg)">pixels</div>
<svg class="r" style="left:35px;top:138px;" width="12" height="12" viewBox="0 0 12 12"><path d="M1,3.5 H11" stroke="#000" stroke-width="1.2" stroke-dasharray="2,2"/><path d="M3.5,1 V11" stroke="#000" stroke-width="1.2" stroke-dasharray="2,2"/><path d="M5.5,5.5 L8.5,8.5" stroke="#000" stroke-width="1.2"/><path d="M10,6.5 V10 H6.5Z" fill="#000"/></svg>
<div class="r" style="left:48px;top:151px;width:1003px;height:1px;background:#8a8a8a"></div>
<div class="r" style="left:48px;top:151px;width:1px;height:517px;background:#8a8a8a"></div>
<div class="r" style="left:49px;top:152px;width:1002px;height:516px;background:#fff"></div>
<div class="r" style="left:855px;top:152px;width:6px;height:515px;background:#c3c3c3"></div>
<div class="r" style="left:233px;top:203px;width:420px;height:419px;background:#6699ff"></div>
<svg class="r" style="left:0;top:0" width="1365" height="738" viewBox="0 0 1365 738">
<defs><clipPath id="ci"><circle cx="443" cy="412.7" r="95.9"/></clipPath></defs>
<circle cx="443" cy="412.7" r="112.5" fill="#aac7ff"/>
<circle cx="443" cy="412.7" r="95.9" fill="#6699ff"/>
<g clip-path="url(#ci)">
<rect x="330" y="290" width="134" height="250" fill="#88e888"/>
<rect x="330" y="280" width="149" height="67" rx="15.5" fill="#88e888"/>
<rect x="330" y="369" width="149" height="31.5" rx="15.5" fill="#88e888"/>
<rect x="330" y="425.5" width="149" height="31.5" rx="15.5" fill="#88e888"/>
<rect x="330" y="478" width="149" height="60" rx="15.5" fill="#88e888"/>
<rect x="403" y="347" width="200" height="22" rx="11" fill="#6699ff"/>
<rect x="403" y="400.5" width="200" height="25" rx="12.5" fill="#6699ff"/>
<rect x="403" y="457" width="200" height="21.5" rx="10.75" fill="#6699ff"/>
<rect x="474.5" y="347" width="200" height="22" rx="11" fill="#fff"/>
<rect x="474.5" y="400.5" width="200" height="25" rx="12.5" fill="#fff"/>
<rect x="474.5" y="457" width="200" height="21.5" rx="10.75" fill="#fff"/>
</g>
<path fill-rule="evenodd" fill="#ff0000" d="M378,453.5 V399.5 A28,28 0 0 1 434,399.5 V453.5 H420 V421 H392 V453.5 Z M392,409 V399.5 A14,14 0 0 1 420,399.5 V409 Z"/>
<path fill-rule="evenodd" fill="#000" d="M440.7,371.5 H466 A41,41 0 0 1 466,453.5 H440.7 Z M455,385.5 H466.5 A27,27 0 0 1 466.5,439.5 H455 Z"/>
<rect x="292.5" y="258.5" width="335" height="314" fill="none" stroke="#ff0000" stroke-width="3"/><line x1="300" y1="267.5" x2="586" y2="267.5" stroke="#ff8c00" stroke-width="1"/><line x1="300" y1="557.5" x2="586" y2="557.5" stroke="#ff8c00" stroke-width="1"/><line x1="297.5" y1="269" x2="297.5" y2="555" stroke="#3c5594" stroke-width="1"/><line x1="298.5" y1="269" x2="298.5" y2="555" stroke="#b030b0" stroke-width="1"/><line x1="587.5" y1="269" x2="587.5" y2="555" stroke="#3c5594" stroke-width="1"/><line x1="588.5" y1="269" x2="588.5" y2="555" stroke="#b030b0" stroke-width="1"/><rect x="296.5" y="265.5" width="3" height="3" fill="#8080a0" stroke="#c06a28"/><rect x="586.5" y="265.5" width="3" height="3" fill="#8080a0" stroke="#c06a28"/><rect x="296.5" y="555.5" width="3" height="3" fill="#8080a0" stroke="#c06a28"/><rect x="586" y="555" width="4" height="4" fill="#b05a30"/><rect x="584.5" y="553.5" width="8" height="8" fill="none" stroke="#a868f0" stroke-width="1"/></svg>
<div class="t " style="left:600.5px;top:552.98px;font-size:9px;color:#b46cff;letter-spacing:0.6px">node</div>
<div class="t " style="left:659px;top:264.27px;font-size:14.8px;color:#ff1a1a">Menyeleksi bagian yang akan diberi efek</div>
<div class="r" style="left:48px;top:668px;width:503px;height:17px;background:#f2f2f2"></div>
<div class="r" style="left:551px;top:668px;width:500px;height:17px;background:#fff"></div>
<div class="r" style="left:48px;top:667px;width:503px;height:1px;background:#8a8a8a"></div>
<div class="r" style="left:550px;top:667px;width:1px;height:17px;background:#8a8a8a"></div>
<div class="r" style="left:48px;top:667px;width:1px;height:17px;background:#8a8a8a"></div>
<svg class="r" style="left:52px;top:670px;" width="9" height="12" viewBox="0 0 9 12"><path d="M0.5,11.5 V0.5 H6 L8.5,3 V11.5Z" fill="#fff" stroke="#000"/><path d="M4.5,4 V10 M1.5,7 H7.5" stroke="#000"/></svg>
<svg class="r" style="left:70px;top:671px;" width="8" height="9" viewBox="0 0 8 9"><path d="M0.5,0 V9" stroke="#888"/><path d="M8,0 V9 L2,4.5Z" fill="#888"/></svg>
<svg class="r" style="left:89px;top:671px;" width="6" height="9" viewBox="0 0 6 9"><path d="M6,0 V9 L0,4.5Z" fill="#888"/></svg>
<div class="t " style="left:115.7px;top:671.14px;font-size:12px;letter-spacing:-0.4px">1 of 1</div>
<svg class="r" style="left:166.5px;top:671px;" width="6" height="9" viewBox="0 0 6 9"><path d="M0,0 V9 L6,4.5Z" fill="#888"/></svg>
<svg class="r" style="left:181px;top:671px;" width="8" height="9" viewBox="0 0 8 9"><path d="M7.5,0 V9" stroke="#888"/><path d="M0,0 V9 L6,4.5Z" fill="#888"/></svg>
<svg class="r" style="left:198px;top:670px;" width="9" height="12" viewBox="0 0 9 12"><path d="M0.5,11.5 V0.5 H6 L8.5,3 V11.5Z" fill="#fff" stroke="#000"/><path d="M4.5,4 V10 M1.5,7 H7.5" stroke="#000"/></svg>
<svg class="r" style="left:212px;top:667px;" width="68" height="17" viewBox="0 0 68 17"><path d="M0.5,17 V0.5 H59 L67,8 V17" fill="#fff" stroke="#b0b0b0"/></svg>
<div class="t " style="left:227.3px;top:668.84px;font-size:12px;letter-spacing:-0.7px">Page 1</div>
<svg class="r" style="left:544px;top:669px;" width="3" height="14" viewBox="0 0 3 14"><path d="M1.5,1 V2 M1.5,4 V5 M1.5,7 V8 M1.5,10 V11" stroke="#aaa"/></svg>
<div class="r" style="left:551px;top:668px;width:17px;height:16px;background:#efefef"></div>
<svg class="r" style="left:556px;top:672px;" width="7" height="9" viewBox="0 0 7 9"><path d="M5.5,0.8 L1.8,4.5 L5.5,8.2" fill="none" stroke="#333" stroke-width="2"/></svg>
<div class="r" style="left:698px;top:669px;width:238px;height:14px;background:#c8c8c8"></div>
<div class="r" style="left:1017px;top:668px;width:17px;height:16px;background:#efefef"></div>
<svg class="r" style="left:1022px;top:672px;" width="7" height="9" viewBox="0 0 7 9"><path d="M1.5,0.8 L5.2,4.5 L1.5,8.2" fill="none" stroke="#333" stroke-width="2"/></svg>
<svg class="r" style="left:1035px;top:668px;" width="16" height="16" viewBox="0 0 16 16"><circle cx="6" cy="6" r="4.8" fill="#fff" stroke="#3a3e70" stroke-width="1.4"/><circle cx="6" cy="6" r="1.6" fill="none" stroke="#3a3e70"/><path d="M9.5,9.5 L14.5,14.5" stroke="#222" stroke-width="2"/></svg>
<div class="r" style="left:1035px;top:152px;width:16px;height:17px;background:#e8e8e8"></div>
<svg class="r" style="left:1038px;top:157px;" width="10" height="7" viewBox="0 0 10 7"><path d="M1.5,5.5 L5,2 L8.5,5.5" fill="none" stroke="#333" stroke-width="2.2"/></svg>
<div class="r" style="left:1035px;top:320px;width:16px;height:179px;background:#c8c8c8"></div>
<div class="r" style="left:1035px;top:650px;width:16px;height:17px;background:#e8e8e8"></div>
<svg class="r" style="left:1038px;top:654px;" width="10" height="7" viewBox="0 0 10 7"><path d="M1.5,1.5 L5,5 L8.5,1.5" fill="none" stroke="#333" stroke-width="2.2"/></svg>
<div class="r" style="left:30px;top:685px;width:1022px;height:19px;background:#f2f2f2"></div>
<div class="r" style="left:30px;top:685px;width:1022px;height:1px;background:#cfcfcf"></div>
<svg class="r" style="left:33px;top:688px;" width="3" height="12" viewBox="0 0 3 12"><path d="M1.5,1 V2 M1.5,4.5 V5.5 M1.5,8 V9" stroke="#999" stroke-width="1.2"/></svg>
<svg class="r" style="left:41px;top:689px;" width="7" height="10" viewBox="0 0 7 10"><path d="M0,0 V10 L7,5Z" fill="#000"/></svg>
<svg class="r" style="left:54px;top:688px;" width="13" height="13" viewBox="0 0 13 13"><path d="M1,12 L8,5" stroke="#6a6e90" stroke-width="2.2"/><path d="M7,3 L10,6" stroke="#222" stroke-width="2.2"/><circle cx="10.5" cy="2.5" r="2.4" fill="#222"/></svg>
<svg class="r" style="left:70px;top:689px;" width="8" height="10" viewBox="0 0 8 10"><path d="M7,0.5 L1.5,5 L7,9.5" fill="none" stroke="#d4c4b0" stroke-width="1.5"/></svg>
<svg class="r" style="left:84px;top:686px;" width="35" height="18" viewBox="0 0 35 18"><rect x="0.5" y="0.5" width="17" height="17" fill="#fff" stroke="#444"/><path d="M1,1 L17,17 M17,1 L1,17" stroke="#222"/><rect x="17.5" y="0.5" width="17" height="17" fill="#6699ff" stroke="#555"/></svg>
<svg class="r" style="left:1014px;top:689px;" width="8" height="12" viewBox="0 0 8 12"><path d="M1,0.5 L6.5,6 L1,11.5" fill="none" stroke="#cfcfcf" stroke-width="1.5"/></svg>
<svg class="r" style="left:1031px;top:690px;" width="11" height="10" viewBox="0 0 11 10"><path d="M1,0.5 L5,5 L1,9.5 M5.5,0.5 L9.5,5 L5.5,9.5" fill="none" stroke="#bbb" stroke-width="1.2"/></svg>
<div class="r" style="left:1052px;top:112px;width:277px;height:592px;background:#f2f2f2"></div>
<div class="r" style="left:1052px;top:112px;width:2px;height:592px;background:#fafafa"></div>
<div class="r" style="left:1054px;top:112px;width:1px;height:592px;background:#dcdcdc"></div>
<div class="r" style="left:1055px;top:113px;width:274px;height:19px;background:#e8e8e8"></div>
<div class="r" style="left:1056px;top:132px;width:253px;height:1px;background:#a8a8a8"></div>
<div class="t " style="left:1060px;top:116.64px;font-size:12px;">Object Manager</div>
<svg class="r" style="left:1296px;top:118px;" width="11" height="9" viewBox="0 0 11 9"><path d="M0,0 V9 L4.5,4.5Z M5,0 V9 L9.5,4.5Z" fill="#a8acc4"/></svg>
<svg class="r" style="left:1313px;top:117px;" width="11" height="11" viewBox="0 0 11 11"><path d="M1,1 L10,10 M10,1 L1,10" stroke="#b8b0a8" stroke-width="1.5"/></svg>
<svg class="r" style="left:1063px;top:143px;" width="17" height="17" viewBox="0 0 17 17"><path d="M1,2 L3,4 L6,0 M1,8 L3,10 L6,6 M1,14 L3,16 L6,12" stroke="#4aa040" stroke-width="1.3" fill="none"/><g fill="#dde0ec" stroke="#6a6e90"><path d="M6,5 L10,1 H16 L12,5Z"/><path d="M6,10 L10,6 H16 L12,10Z"/><path d="M6,15 L10,11 H16 L12,15Z"/></g></svg>
<div class="r" style="left:1089px;top:141px;width:23px;height:23px;background:#fff;border:1px solid #b0b0b0"></div>
<svg class="r" style="left:1092px;top:144px;" width="17" height="17" viewBox="0 0 17 17"><g fill="#e8eaf2" stroke="#6a6e90"><path d="M1,7 L6,3 H12 L7,7Z"/><path d="M1,10 L6,6 H12 L7,10Z"/><path d="M1,13 L6,9 H12 L7,13Z"/></g><path d="M9,5 L13,1 L16,4 L12,8Z" fill="#222"/><path d="M6,12 L9,5 L12,8Z" fill="#fff" stroke="#222"/></svg>
<svg class="r" style="left:1119px;top:143px;" width="18" height="18" viewBox="0 0 18 18"><text x="0" y="6" font-size="5" fill="#6a6e90" font-family="Liberation Sans">1</text><text x="0" y="11" font-size="5" fill="#6a6e90" font-family="Liberation Sans">2</text><text x="0" y="16" font-size="5" fill="#6a6e90" font-family="Liberation Sans">3</text><g fill="#dde0ec" stroke="#6a6e90"><path d="M4,6 L8,2 H14 L10,6Z"/><path d="M4,10 L8,6 H14 L10,10Z"/><path d="M4,14 L8,10 H14 L10,14Z"/></g><ellipse cx="11" cy="4" rx="4" ry="2.5" fill="#555"/><path d="M18,13 V18 H13Z" fill="#000"/></svg>
<div class="t " style="left:1154.5px;top:139.24px;font-size:12px;letter-spacing:-1.05px;word-spacing:1.6px">Page 1</div>
<div class="t " style="left:1154.5px;top:154.04px;font-size:12px;letter-spacing:-1px;word-spacing:1.6px">Layer 1</div>
<svg class="r" style="left:1288px;top:142px;" width="6" height="9" viewBox="0 0 6 9"><path d="M0,0 V9 L6,4.5Z" fill="#000"/></svg>
<div class="r" style="left:1061px;top:170px;width:241px;height:499px;background:#fff;border:1px solid #6a6a6a"></div>
<div class="r" style="left:1062px;top:171px;width:239px;height:18px;background:#dae5f3"></div>
<div class="r" style="left:1062px;top:188px;width:239px;height:1px;background:#c0cad8"></div>
<div class="r" style="left:1062px;top:261px;width:239px;height:18px;background:#dae5f3"></div>
<div class="r" style="left:1062px;top:260px;width:239px;height:1px;background:#c0cad8"></div>
<div class="r" style="left:1062px;top:278px;width:239px;height:1px;background:#c0cad8"></div>
<div class="r" style="left:1062px;top:206px;width:239px;height:1px;background:#e0e0e0"></div>
<div class="r" style="left:1062px;top:296px;width:239px;height:1px;background:#e0e0e0"></div>
<div class="r" style="left:1062px;top:314px;width:239px;height:1px;background:#e0e0e0"></div>
<svg class="r" style="left:1069px;top:175px;" width="10" height="10" viewBox="0 0 10 10"><rect x="0.5" y="0.5" width="9" height="9" fill="#fff" stroke="#222"/><path d="M2.5,5 H7.5" stroke="#222"/></svg>
<svg class="r" style="left:1086px;top:173px;" width="12" height="14" viewBox="0 0 12 14"><path d="M0.5,13.5 V3 L3,0.5 H11.5 V13.5Z" fill="#eef0f4" stroke="#555"/><rect x="2" y="8" width="8" height="4" fill="#c8e0e8"/></svg>
<div class="t " style="left:1102.9px;top:173.34px;font-size:12px;font-weight:bold;letter-spacing:-0.43px">Page 1</div>
<svg class="r" style="left:1069px;top:265px;" width="10" height="10" viewBox="0 0 10 10"><rect x="0.5" y="0.5" width="9" height="9" fill="#fff" stroke="#222"/><path d="M2.5,5 H7.5" stroke="#222"/></svg>
<svg class="r" style="left:1086px;top:263px;" width="12" height="14" viewBox="0 0 12 14"><path d="M0.5,13.5 V3 L3,0.5 H11.5 V13.5Z" fill="#eef0f4" stroke="#555"/><rect x="2" y="8" width="8" height="4" fill="#c8e0e8"/></svg>
<div class="t " style="left:1102.7px;top:263.34px;font-size:12px;font-weight:bold;letter-spacing:-0.24px">Master Page</div>
<svg class="r" style="left:1105px;top:193px;" width="12" height="10" viewBox="0 0 12 10"><path d="M0.5,5 Q6,-0.5 11.5,5 Q6,9.5 0.5,5Z" fill="#d0d0d8" stroke="#777"/><circle cx="6.2" cy="4.6" r="2.5" fill="#444"/><path d="M1,4 Q6,0 11,4" stroke="#555" fill="none"/></svg>
<svg class="r" style="left:1120px;top:192px;" width="13" height="13" viewBox="0 0 13 13"><rect x="1.5" y="6" width="11" height="6.5" fill="#eee" stroke="#888"/><circle cx="6.5" cy="5.5" r="4.5" fill="none" stroke="#e00000" stroke-width="1.6"/><path d="M3.5,8.5 L9.5,2.5" stroke="#e00000" stroke-width="1.6"/></svg>
<svg class="r" style="left:1136px;top:192px;" width="12" height="13" viewBox="0 0 12 13"><path d="M1,12.5 L2.5,8 L9,1.5 L12,4.5 L5.5,11Z" fill="#5a5a60"/><path d="M1,12.5 L2.5,8 L5.5,11Z" fill="#d0d0d0"/></svg>
<div class="r" style="left:1149px;top:191px;width:15px;height:12px;background:#0000ff"></div>
<div class="t " style="left:1171.4px;top:192.24px;font-size:12px;font-style:italic;letter-spacing:-0.5px">Guides</div>
<svg class="r" style="left:1088px;top:211px;" width="10" height="10" viewBox="0 0 10 10"><rect x="0.5" y="0.5" width="9" height="9" fill="#fff" stroke="#222"/><path d="M2.5,5 H7.5" stroke="#222"/></svg>
<svg class="r" style="left:1105px;top:211px;" width="12" height="10" viewBox="0 0 12 10"><path d="M0.5,5 Q6,-0.5 11.5,5 Q6,9.5 0.5,5Z" fill="#d0d0d8" stroke="#777"/><circle cx="6.2" cy="4.6" r="2.5" fill="#444"/><path d="M1,4 Q6,0 11,4" stroke="#555" fill="none"/></svg>
<svg class="r" style="left:1120px;top:210px;" width="13" height="13" viewBox="0 0 13 13"><rect x="3" y="0.5" width="7" height="5" fill="#fff" stroke="#555"/><rect x="0.5" y="5.5" width="12" height="6" fill="#ddd" stroke="#555"/><rect x="1" y="6" width="11" height="2" fill="#333"/></svg>
<svg class="r" style="left:1136px;top:210px;" width="12" height="13" viewBox="0 0 12 13"><path d="M1,12.5 L2.5,8 L9,1.5 L12,4.5 L5.5,11Z" fill="#5a5a60"/><path d="M1,12.5 L2.5,8 L5.5,11Z" fill="#d0d0d0"/></svg>
<div class="r" style="left:1149px;top:209px;width:15px;height:12px;background:#1a1a1a"></div>
<div class="t " style="left:1171.4px;top:210.24px;font-size:12px;font-weight:bold;color:#ee0000;letter-spacing:-0.4px">Layer 1</div>
<svg class="r" style="left:1123px;top:226px;" width="14" height="14" viewBox="0 0 14 14"><rect x="0.5" y="0.5" width="12" height="12" fill="#fff" stroke="#222" stroke-width="1.2"/></svg>
<div class="r" style="left:1141px;top:225px;width:59px;height:18px;background:#7eb4e8"></div>
<div class="t " style="left:1142px;top:228.34px;font-size:12px;color:#fff;letter-spacing:-0.35px">Rectangle</div>
<svg class="r" style="left:1123px;top:243px;" width="14" height="16" viewBox="0 0 14 16"><rect x="1.5" y="1.5" width="11" height="13" fill="#fff" stroke="#555"/><rect x="0" y="0" width="3" height="3" fill="#555"/><rect x="11" y="0" width="3" height="3" fill="#555"/><rect x="0" y="13" width="3" height="3" fill="#555"/><rect x="11" y="13" width="3" height="3" fill="#555"/><path d="M5,12 Q7,6 10,9 V12Z" fill="#222"/></svg>
<div class="t " style="left:1141.5px;top:246.34px;font-size:12px;letter-spacing:-0.2px">Bitmap</div>
<svg class="r" style="left:1105px;top:283px;" width="12" height="10" viewBox="0 0 12 10"><path d="M0.5,5 Q6,-0.5 11.5,5 Q6,9.5 0.5,5Z" fill="#d0d0d8" stroke="#777"/><circle cx="6.2" cy="4.6" r="2.5" fill="#444"/><path d="M1,4 Q6,0 11,4" stroke="#555" fill="none"/></svg>
<svg class="r" style="left:1120px;top:282px;" width="13" height="13" viewBox="0 0 13 13"><rect x="1.5" y="6" width="11" height="6.5" fill="#eee" stroke="#888"/><circle cx="6.5" cy="5.5" r="4.5" fill="none" stroke="#e00000" stroke-width="1.6"/><path d="M3.5,8.5 L9.5,2.5" stroke="#e00000" stroke-width="1.6"/></svg>
<svg class="r" style="left:1136px;top:282px;" width="12" height="13" viewBox="0 0 12 13"><path d="M1,12.5 L2.5,8 L9,1.5 L12,4.5 L5.5,11Z" fill="#5a5a60"/><path d="M1,12.5 L2.5,8 L5.5,11Z" fill="#d0d0d0"/></svg>
<div class="r" style="left:1149px;top:281px;width:15px;height:12px;background:#0000ff"></div>
<div class="t " style="left:1171.4px;top:282.24px;font-size:12px;font-style:italic;color:#1c4fa8;letter-spacing:-0.2px">Guides (all pages)</div>
<svg class="r" style="left:1105px;top:301px;" width="12" height="10" viewBox="0 0 12 10"><path d="M0.5,5 Q6,-0.5 11.5,5 Q6,9.5 0.5,5Z" fill="#d0d0d8" stroke="#777"/><circle cx="6.2" cy="4.6" r="2.5" fill="#444"/><path d="M1,4 Q6,0 11,4" stroke="#555" fill="none"/></svg>
<svg class="r" style="left:1120px;top:300px;" width="13" height="13" viewBox="0 0 13 13"><rect x="1.5" y="6" width="11" height="6.5" fill="#eee" stroke="#888"/><circle cx="6.5" cy="5.5" r="4.5" fill="none" stroke="#e00000" stroke-width="1.6"/><path d="M3.5,8.5 L9.5,2.5" stroke="#e00000" stroke-width="1.6"/></svg>
<svg class="r" style="left:1136px;top:300px;" width="12" height="13" viewBox="0 0 12 13"><path d="M1,12.5 L2.5,8 L9,1.5 L12,4.5 L5.5,11Z" fill="#5a5a60"/><path d="M1,12.5 L2.5,8 L5.5,11Z" fill="#d0d0d0"/></svg>
<div class="r" style="left:1149px;top:299px;width:15px;height:12px;background:#1a1a1a"></div>
<div class="t " style="left:1171.4px;top:300.24px;font-size:12px;font-style:italic;color:#1c4fa8;letter-spacing:-0.37px">Desktop</div>
<svg class="r" style="left:1105px;top:319px;" width="12" height="10" viewBox="0 0 12 10"><ellipse cx="6" cy="6" rx="5.8" ry="3.2" fill="#bbb" stroke="#666"/></svg>
<svg class="r" style="left:1120px;top:318px;" width="13" height="13" viewBox="0 0 13 13"><rect x="1.5" y="6" width="11" height="6.5" fill="#eee" stroke="#888"/><circle cx="6.5" cy="5.5" r="4.5" fill="none" stroke="#e00000" stroke-width="1.6"/><path d="M3.5,8.5 L9.5,2.5" stroke="#e00000" stroke-width="1.6"/></svg>
<svg class="r" style="left:1136px;top:318px;" width="12" height="13" viewBox="0 0 12 13"><path d="M1,12.5 L2.5,8 L9,1.5 L12,4.5 L5.5,11Z" fill="#5a5a60"/><path d="M1,12.5 L2.5,8 L5.5,11Z" fill="#d0d0d0"/><circle cx="6.5" cy="6" r="4.5" fill="none" stroke="#e00000" stroke-width="1.6"/><path d="M3.5,9 L9.5,3" stroke="#e00000" stroke-width="1.6"/></svg>
<div class="r" style="left:1149px;top:317px;width:15px;height:12px;background:#c8c8c8"></div>
<div class="t " style="left:1171.4px;top:318.24px;font-size:12px;font-style:italic;color:#1c4fa8;letter-spacing:-0.24px">Document Grid</div>
<svg class="r" style="left:1063px;top:677px;" width="17" height="16" viewBox="0 0 17 16"><g fill="#dde0ec" stroke="#6a6e90"><path d="M1,6 L5,2 H12 L8,6Z"/><path d="M1,10 L5,6 H12 L8,10Z"/><path d="M1,14 L5,10 H12 L8,14Z"/></g><circle cx="12" cy="4" r="3.5" fill="#3fa53f"/></svg>
<svg class="r" style="left:1091px;top:677px;" width="17" height="16" viewBox="0 0 17 16"><text x="0" y="5" font-size="5" fill="#6a6e90" font-family="Liberation Sans">1</text><text x="0" y="10.5" font-size="5" fill="#6a6e90" font-family="Liberation Sans">2</text><text x="0" y="16" font-size="5" fill="#6a6e90" font-family="Liberation Sans">3</text><g fill="#dde0ec" stroke="#6a6e90"><path d="M4,10 L8,6 H14 L10,10Z"/><path d="M4,14 L8,10 H14 L10,14Z"/></g><path d="M6,11 L10,7" stroke="#f07800" stroke-width="2"/><circle cx="12" cy="4" r="3.5" fill="#3fa53f"/></svg>
<svg class="r" style="left:1119px;top:677px;" width="17" height="16" viewBox="0 0 17 16"><text x="0" y="5" font-size="5" fill="#6a6e90" font-family="Liberation Sans">1</text><text x="0" y="10.5" font-size="5" fill="#6a6e90" font-family="Liberation Sans">3</text><text x="0" y="16" font-size="5" fill="#6a6e90" font-family="Liberation Sans">5</text><g fill="#dde0ec" stroke="#6a6e90"><path d="M4,10 L8,6 H14 L10,10Z"/><path d="M4,14 L8,10 H14 L10,14Z"/></g><path d="M6,11 L10,7" stroke="#f07800" stroke-width="2"/><circle cx="12" cy="4" r="3.5" fill="#3fa53f"/></svg>
<svg class="r" style="left:1147px;top:677px;" width="17" height="16" viewBox="0 0 17 16"><text x="0" y="5" font-size="5" fill="#ccc" font-family="Liberation Sans">2</text><text x="0" y="10.5" font-size="5" fill="#ccc" font-family="Liberation Sans">4</text><text x="0" y="16" font-size="5" fill="#ccc" font-family="Liberation Sans">6</text><g fill="#e4e4e4" stroke="#ccc"><path d="M4,6 L8,2 H14 L10,6Z"/><path d="M4,10 L8,6 H14 L10,10Z"/><path d="M4,14 L8,10 H14 L10,14Z"/></g></svg>
<svg class="r" style="left:1278px;top:677px;" width="13" height="16" viewBox="0 0 13 16"><path d="M0.5,3 H12.5 M4,3 V1 H9 V3" fill="none" stroke="#5a5e80" stroke-width="1.2"/><path d="M1.5,4 V15 H11.5 V4" fill="none" stroke="#5a5e80" stroke-width="1.2"/><path d="M4.5,6 V13 M8.5,6 V13" stroke="#5a5e80" stroke-width="1.2"/></svg>
<div class="r" style="left:1308px;top:132px;width:1px;height:572px;background:#1a9ff0"></div>
<div class="r" style="left:1309px;top:132px;width:19px;height:128px;background:#cfe3fb"></div>
<div class="r" style="left:1309px;top:260px;width:19px;height:444px;background:#e8e8e8"></div>
<svg class="r" style="left:1310px;top:137px;" width="16" height="14" viewBox="0 0 16 14"><path d="M2,2 V13 M2,6 H6 M2,11 H6" stroke="#6a6e90" stroke-dasharray="1,1"/><rect x="0" y="0" width="4" height="4" fill="#fff" stroke="#555"/><rect x="6" y="2" width="6" height="6" fill="#ddd" stroke="#555"/><rect x="8" y="8" width="6" height="5" fill="#555"/></svg>
<div class="t" style="left:1318px;top:157px;font-size:12px;transform-origin:0 0;transform:rotate(90deg) translate(0,-6px)">Object Manager</div>
<svg class="r" style="left:1310px;top:277px;" width="18" height="18" viewBox="0 0 18 18"><circle cx="9" cy="9" r="8" fill="none" stroke="#bbb" stroke-width="1.3"/><path d="M9,3.5 V14.5 M3.5,9 H14.5" stroke="#bbb" stroke-width="2"/></svg>
<div class="r" style="left:1328px;top:112px;width:37px;height:592px;background:#e8e8e8"></div>
<div class="r" style="left:1328px;top:112px;width:1px;height:592px;background:#d8d8d8"></div>
<div class="r" style="left:1347px;top:112px;width:1px;height:592px;background:#d0d0d0"></div>
<div class="r" style="left:1329px;top:112px;width:18px;height:55px;background:#f2f2f2"></div>
<svg class="r" style="left:1333px;top:115px;" width="10" height="3" viewBox="0 0 10 3"><path d="M1,1.5 H2 M4.5,1.5 H5.5 M8,1.5 H9" stroke="#999"/></svg>
<svg class="r" style="left:1334px;top:123px;" width="6" height="9" viewBox="0 0 6 9"><path d="M0,0 V9 L6,4.5Z" fill="#000"/></svg>
<svg class="r" style="left:1333px;top:136px;" width="12" height="13" viewBox="0 0 12 13"><path d="M1,12 L7,6" stroke="#c8c8c8" stroke-width="2.2"/><path d="M6,4 L9,7" stroke="#bbb" stroke-width="2.2"/><circle cx="9.5" cy="3" r="2.4" fill="#c0c0c0"/></svg>
<svg class="r" style="left:1333px;top:153px;" width="11" height="7" viewBox="0 0 11 7"><path d="M1,6 L5.5,1.5 L10,6" fill="none" stroke="#d0d0d0" stroke-width="1.5"/></svg>
<svg class="r" style="left:1329px;top:167px;" width="18" height="496" viewBox="0 0 18 496"><rect x="0" y="0" width="18" height="495.45" fill="#5a5a5a"/><rect x="1" y="1" width="16" height="16" fill="#ffffff"/><rect x="1" y="18" width="16" height="16" fill="#000000"/><rect x="1" y="35" width="16" height="16" fill="#1a1a1a"/><rect x="1" y="52" width="16" height="16" fill="#333333"/><rect x="1" y="69" width="16" height="16" fill="#4d4d4d"/><rect x="1" y="86" width="16" height="16" fill="#666666"/><rect x="1" y="103" width="16" height="16" fill="#808080"/><rect x="1" y="120" width="16" height="16" fill="#999999"/><rect x="1" y="137" width="16" height="16" fill="#b3b3b3"/><rect x="1" y="154" width="16" height="17" fill="#cccccc"/><rect x="1" y="171" width="16" height="17" fill="#e6e6e6"/><rect x="1" y="189" width="16" height="16" fill="#ffffff"/><rect x="1" y="206" width="16" height="16" fill="#0000ff"/><rect x="1" y="223" width="16" height="16" fill="#00ffff"/><rect x="1" y="240" width="16" height="16" fill="#00ff00"/><rect x="1" y="257" width="16" height="16" fill="#ffff00"/><rect x="1" y="274" width="16" height="16" fill="#ff0000"/><rect x="1" y="291" width="16" height="16" fill="#ff00ff"/><rect x="1" y="308" width="16" height="16" fill="#9900cc"/><rect x="1" y="325" width="16" height="16" fill="#ff6600"/><rect x="1" y="342" width="16" height="16" fill="#ff99cc"/><rect x="1" y="359" width="16" height="16" fill="#663333"/><rect x="1" y="376" width="16" height="16" fill="#ccccff"/><rect x="1" y="393" width="16" height="16" fill="#9999ff"/><rect x="1" y="410" width="16" height="16" fill="#6699ff"/><rect x="1" y="427" width="16" height="16" fill="#6666ff"/><rect x="1" y="444" width="16" height="16" fill="#6666cc"/><rect x="1" y="461" width="16" height="16" fill="#003399"/><rect x="1" y="478" width="16" height="16" fill="#000066"/><path d="M2.5,2 L15,16 M15,2 L2.5,16" stroke="#333"/></svg>
<svg class="r" style="left:1332px;top:666px;" width="12" height="8" viewBox="0 0 12 8"><path d="M1,1 L6,6.5 L11,1" fill="none" stroke="#b8bcc8" stroke-width="1.5"/></svg>
<svg class="r" style="left:1332px;top:684px;" width="12" height="9" viewBox="0 0 12 9"><path d="M1,1 L5,4.5 L1,8 M6,1 L10,4.5 L6,8" fill="none" stroke="#b8bcc8" stroke-width="1.3"/></svg>
<div class="r" style="left:1348px;top:112px;width:17px;height:55px;background:#f2f2f2"></div>
<svg class="r" style="left:1352px;top:115px;" width="10" height="3" viewBox="0 0 10 3"><path d="M1,1.5 H2 M4.5,1.5 H5.5 M8,1.5 H9" stroke="#999"/></svg>
<svg class="r" style="left:1353px;top:123px;" width="6" height="9" viewBox="0 0 6 9"><path d="M0,0 V9 L6,4.5Z" fill="#000"/></svg>
<svg class="r" style="left:1352px;top:136px;" width="12" height="13" viewBox="0 0 12 13"><path d="M1,12 L7,6" stroke="#6a6e90" stroke-width="2.2"/><path d="M6,4 L9,7" stroke="#222" stroke-width="2.2"/><circle cx="9.5" cy="3" r="2.4" fill="#222"/></svg>
<svg class="r" style="left:1352px;top:153px;" width="11" height="7" viewBox="0 0 11 7"><path d="M1,6 L5.5,1.5 L10,6" fill="none" stroke="#d0d0d0" stroke-width="1.5"/></svg>
<svg class="r" style="left:1348px;top:167px;" width="17" height="496" viewBox="0 0 17 496"><rect x="0" y="0" width="17" height="495.45" fill="#5a5a5a"/><rect x="1" y="1" width="16" height="16" fill="#ffffff"/><rect x="1" y="18" width="16" height="16" fill="#000000"/><rect x="1" y="35" width="16" height="16" fill="#1a1a1a"/><rect x="1" y="52" width="16" height="16" fill="#333333"/><rect x="1" y="69" width="16" height="16" fill="#4d4d4d"/><rect x="1" y="86" width="16" height="16" fill="#666666"/><rect x="1" y="103" width="16" height="16" fill="#808080"/><rect x="1" y="120" width="16" height="16" fill="#999999"/><rect x="1" y="137" width="16" height="16" fill="#b3b3b3"/><rect x="1" y="154" width="16" height="17" fill="#cccccc"/><rect x="1" y="171" width="16" height="17" fill="#e6e6e6"/><rect x="1" y="189" width="16" height="16" fill="#ffffff"/><rect x="1" y="206" width="16" height="16" fill="#0000ff"/><rect x="1" y="223" width="16" height="16" fill="#00ffff"/><rect x="1" y="240" width="16" height="16" fill="#00ff00"/><rect x="1" y="257" width="16" height="16" fill="#ffff00"/><rect x="1" y="274" width="16" height="16" fill="#ff0000"/><rect x="1" y="291" width="16" height="16" fill="#ff00ff"/><rect x="1" y="308" width="16" height="16" fill="#9900cc"/><rect x="1" y="325" width="16" height="16" fill="#ff6600"/><rect x="1" y="342" width="16" height="16" fill="#ff99cc"/><rect x="1" y="359" width="16" height="16" fill="#663333"/><rect x="1" y="376" width="16" height="16" fill="#ccccff"/><rect x="1" y="393" width="16" height="16" fill="#9999ff"/><rect x="1" y="410" width="16" height="16" fill="#6699ff"/><rect x="1" y="427" width="16" height="16" fill="#6666ff"/><rect x="1" y="444" width="16" height="16" fill="#6666cc"/><rect x="1" y="461" width="16" height="16" fill="#003399"/><rect x="1" y="478" width="16" height="16" fill="#000066"/><path d="M2.5,2 L14,16 M14,2 L2.5,16" stroke="#333"/></svg>
<svg class="r" style="left:1351px;top:666px;" width="12" height="8" viewBox="0 0 12 8"><path d="M1,1 L6,6.5 L11,1" fill="none" stroke="#b8bcc8" stroke-width="1.5"/></svg>
<svg class="r" style="left:1351px;top:684px;" width="12" height="9" viewBox="0 0 12 9"><path d="M1,1 L5,4.5 L1,8 M6,1 L10,4.5 L6,8" fill="none" stroke="#b8bcc8" stroke-width="1.3"/></svg>
<div class="r" style="left:0px;top:704px;width:1365px;height:34px;background:#f2f2f2"></div>
<div class="r" style="left:0px;top:704px;width:1365px;height:1px;background:#dcdcdc"></div>
<div class="t " style="left:5px;top:715.87px;font-size:11.5px;letter-spacing:-0.2px">( 2,284 , 639&nbsp;&nbsp; )</div>
<div class="r" style="left:91px;top:714px;width:14px;height:14px;background:#fff;border:1px solid #000"></div>
<svg class="r" style="left:95px;top:717px;" width="6" height="8" viewBox="0 0 6 8"><path d="M0,0 V8 L6,4Z" fill="#000"/></svg>
<div class="t " style="left:158.4px;top:715.87px;font-size:11.5px;letter-spacing:-0.3px">Scale: 100.0 %</div>
<div class="t " style="left:545.4px;top:699.71px;font-size:32px;letter-spacing:0.7px;-webkit-text-stroke:0.5px #000">www.kangajat.com</div>
<svg class="r" style="left:912px;top:713px;" width="16" height="16" viewBox="0 0 16 16"><rect x="0.5" y="0.5" width="15" height="12" fill="#e8e8f0" stroke="#6a6e90"/><circle cx="8" cy="6.5" r="3.5" fill="#fff" stroke="#333" stroke-width="1.4"/><path d="M4,15 H12" stroke="#6a6e90"/></svg>
<svg class="r" style="left:940px;top:713px;" width="17" height="16" viewBox="0 0 17 16"><path d="M2,7 L8,1 L14,7 L8,13Z" fill="#fff" stroke="#3a3e70" stroke-width="1.3"/><path d="M3,8 H13 L8,13Z" fill="#f07800"/><path d="M14,8 Q16,12 14.5,14" stroke="#f07800" stroke-width="1.5" fill="none"/></svg>
<svg class="r" style="left:962px;top:712px;" width="18" height="18" viewBox="0 0 18 18"><rect x="0.5" y="0.5" width="17" height="17" fill="#fff" stroke="#888"/><path d="M1,1 L17,17 M17,1 L1,17" stroke="#333"/></svg>
<div class="t " style="left:983.5px;top:716.87px;font-size:11.5px;">None</div>
<div class="r" style="left:1144px;top:712px;width:1px;height:22px;background:#d0d0d0"></div>
<svg class="r" style="left:1154px;top:713px;" width="9" height="15" viewBox="0 0 9 15"><path d="M4.5,1 L8,7 L6.5,11 H2.5 L1,7Z" fill="#fff" stroke="#3a3e70"/><path d="M4.5,4 V8" stroke="#3a3e70"/><rect x="1" y="12.5" width="7" height="2" fill="#3a3e70"/></svg>
<div class="r" style="left:1171px;top:712px;width:18px;height:18px;background:#000;border:1px solid #555"></div>
<div class="t " style="left:1192.3px;top:715.64px;font-size:12px;letter-spacing:-0.6px">R:0 G:0 B:0 (#000000)</div>
<div class="t " style="left:1307.5px;top:715.64px;font-size:12px;letter-spacing:-0.3px">2 px</div>
</body></html>
